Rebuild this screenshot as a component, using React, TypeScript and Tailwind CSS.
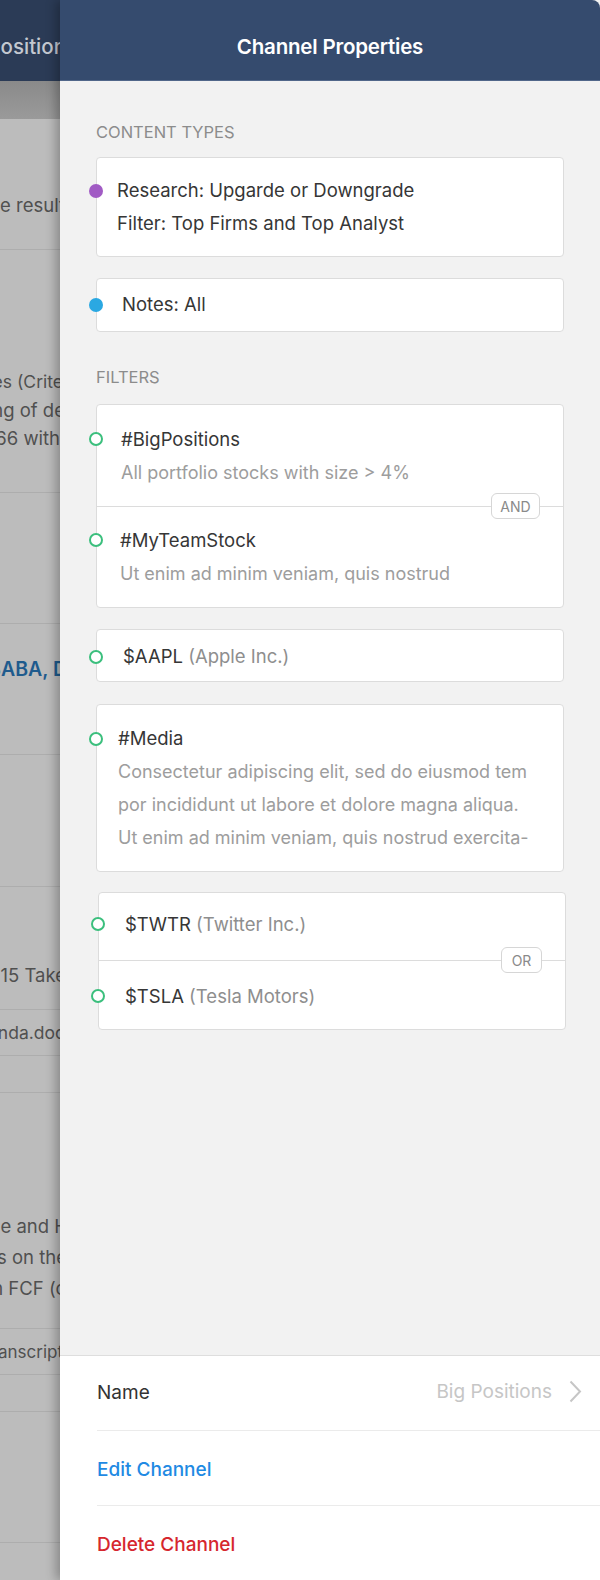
import React from "react";

function ClipRow({
  text,
  className,
  textClass,
}: {
  text: string;
  className: string;
  textClass: string;
}) {
  return (
    <div className={"flex justify-end whitespace-nowrap overflow-hidden " + className}>
      <span className={textClass}>{text}</span>
    </div>
  );
}

function Background() {
  const line = "border-b border-[#adadad]";
  return (
    <div className="w-[60px] shrink-0 flex flex-col bg-[#bcbcbc] overflow-hidden text-[18.5px] text-[#505050]">
      <div className="h-[81px] shrink-0 bg-[#2b3b56] flex justify-end items-center pt-[14px] whitespace-nowrap overflow-hidden">
        <span className="text-[20.5px] text-[#c3c8d0] font-medium mr-[-6px]">Position</span>
      </div>
      <div className="h-[38px] shrink-0 bg-gradient-to-b from-[#8a8a8a] to-[#9a9a9a]" />
      <div className={"h-[131px] shrink-0 flex flex-col " + line}>
        <ClipRow text="the result" className="mt-[72px] leading-[28px]" textClass="mr-[-5px]" />
      </div>
      <div className={"h-[243px] shrink-0 flex flex-col " + line}>
        <div className="mt-[118px] flex flex-col leading-[28px]">
          <ClipRow text="ies (Crite" className="text-[17.5px]" textClass="mr-[-3px]" />
          <ClipRow text="ring of de" className="" textClass="mr-[-5px]" />
          <ClipRow text="2266 with" className="" textClass="mr-[0px]" />
        </div>
      </div>
      <div className={"h-[131px] shrink-0 " + line} />
      <div className={"h-[131px] shrink-0 flex flex-col " + line}>
        <ClipRow
          text="BABA, D"
          className="mt-[31px] leading-[28px]"
          textClass="mr-[-7px] text-[19.5px] font-semibold text-[#1f5b8d]"
        />
      </div>
      <div className={"h-[132px] shrink-0 " + line} />
      <div className={"h-[123px] shrink-0 flex flex-col " + line}>
        <ClipRow text="2015 Take" className="mt-[74px] leading-[28px]" textClass="mr-[-6px]" />
      </div>
      <div className={"h-[46px] shrink-0 flex flex-col justify-center " + line}>
        <ClipRow text="genda.doc" className="text-[17.5px] leading-[22px]" textClass="mr-[-5px]" />
      </div>
      <div className={"h-[37px] shrink-0 " + line} />
      <div className={"h-[236px] shrink-0 flex flex-col " + line}>
        <div className="mt-[118px] flex flex-col leading-[31px]">
          <ClipRow text="cale and H" className="" textClass="mr-[-8px]" />
          <ClipRow text="ws on the" className="" textClass="mr-[-7px]" />
          <ClipRow text="th FCF (c" className="" textClass="mr-[-6px]" />
        </div>
      </div>
      <div className={"h-[46px] shrink-0 flex flex-col justify-center " + line}>
        <ClipRow text="transcript" className="text-[17px] leading-[22px]" textClass="mr-[-3px]" />
      </div>
      <div className={"h-[37px] shrink-0 " + line} />
      <div className={"h-[131px] shrink-0 " + line} />
      <div className="flex-1" />
    </div>
  );
}

function Dot({ color }: { color: string }) {
  return <span className={"w-[14px] h-[14px] rounded-full shrink-0 ml-[-8px] " + color} />;
}

function Ring() {
  return (
    <span className="w-[14px] h-[14px] rounded-full shrink-0 ml-[-8px] border-2 border-[#3bbf7d] bg-white" />
  );
}

function Badge({ label, w }: { label: string; w: string }) {
  return (
    <div className="relative h-px bg-[#dcdcdc]">
      <div
        className={
          "absolute right-[23px] top-[-13px] h-[26px] rounded-[6px] border border-[#d6d6d6] bg-white flex items-center justify-center text-[14px] text-[#8a8a8a] " +
          w
        }
      >
        {label}
      </div>
    </div>
  );
}

function Panel() {
  const card = "bg-white border border-[#dcdcdc] rounded-[4px]";
  const title = "text-[18.5px] text-[#363636]";
  const desc = "text-[18px] text-[#9d9d9d]";
  return (
    <div className="relative z-10 flex-1 flex flex-col bg-[#f2f2f2] shadow-[-4px_0_10px_rgba(0,0,0,0.28)]">
      <div className="h-[81px] shrink-0 bg-[#354b6e] border-b border-[#51678a] rounded-tr-[8px] flex items-center justify-center pt-[14px]">
        <span className="text-white text-[20.5px] font-semibold tracking-[-0.2px]">Channel Properties</span>
      </div>
      <div className="flex flex-col px-[36px]">
        <div className="mt-[41px] h-[20px] leading-[20px] text-[16.5px] text-[#8c8c8c] uppercase">Content Types</div>
        <div className={"mt-[15px] " + card}>
          <div className="flex items-start py-[16px]">
            <div className="h-[33px] flex items-center">
              <Dot color="bg-[#a15bc4]" />
            </div>
            <div className={"ml-[14px] flex flex-col leading-[33px] " + title}>
              <span>Research: Upgarde or Downgrade</span>
              <span>Filter: Top Firms and Top Analyst</span>
            </div>
          </div>
        </div>
        <div className={"mt-[21px] h-[54px] flex items-center " + card}>
          <Dot color="bg-[#2aa8e2]" />
          <span className={"ml-[19px] " + title}>Notes: All</span>
        </div>

        <div className="mt-[35px] h-[20px] leading-[20px] text-[16.5px] text-[#8c8c8c] uppercase">Filters</div>
        <div className={"mt-[17px] " + card}>
          <div className="flex items-start pt-[17px] pb-[16px]">
            <div className="h-[34px] flex items-center">
              <Ring />
            </div>
            <div className="ml-[18px] flex flex-col leading-[34px]">
              <span className={title}>#BigPositions</span>
              <span className={desc}>All portfolio stocks with size &gt; 4%</span>
            </div>
          </div>
          <Badge label="AND" w="w-[49px]" />
          <div className="flex items-start pt-[16px] pb-[16px]">
            <div className="h-[34px] flex items-center">
              <Ring />
            </div>
            <div className="ml-[17px] flex flex-col leading-[34px]">
              <span className={title}>#MyTeamStock</span>
              <span className={desc}>Ut enim ad minim veniam, quis nostrud</span>
            </div>
          </div>
        </div>

        <div className={"mt-[21px] h-[53px] flex items-center pt-[2px] " + card}>
          <Ring />
          <span className={"ml-[20px] " + title}>
            $AAPL <span className="text-[#8e8e8e]">(Apple Inc.)</span>
          </span>
        </div>

        <div className={"mt-[22px] " + card}>
          <div className="flex items-start pt-[17px] pb-[17px]">
            <div className="h-[33px] flex items-center">
              <Ring />
            </div>
            <div className="ml-[15px] flex flex-col leading-[33px] whitespace-nowrap">
              <span className={title}>#Media</span>
              <span className={desc}>Consectetur adipiscing elit, sed do eiusmod tem</span>
              <span className={desc}>por incididunt ut labore et dolore magna aliqua.</span>
              <span className={desc}>Ut enim ad minim veniam, quis nostrud exercita-</span>
            </div>
          </div>
        </div>

        <div className={"mt-[20px] ml-[2px] mr-[-2px] " + card}>
          <div className="h-[67px] flex items-start pt-[15px]">
            <div className="h-[32px] flex items-center">
              <Ring />
            </div>
            <span className={"ml-[20px] leading-[32px] " + title}>
              $TWTR <span className="text-[#8e8e8e]">(Twitter Inc.)</span>
            </span>
          </div>
          <Badge label="OR" w="w-[41px]" />
          <div className="h-[68px] flex items-start pt-[19px]">
            <div className="h-[32px] flex items-center">
              <Ring />
            </div>
            <span className={"ml-[20px] leading-[32px] " + title}>
              $TSLA <span className="text-[#8e8e8e]">(Tesla Motors)</span>
            </span>
          </div>
        </div>
      </div>

      <div className="mt-auto bg-white border-t border-[#dedede] flex flex-col pl-[37px] text-[19px]">
        <div className="h-[75px] flex items-center border-b border-[#ebebeb] pr-[18px]">
          <span className="text-[#333333] mt-[1px]">Name</span>
          <span className="ml-auto text-[#c6c6c6] mt-[-2px]">Big Positions</span>
          <svg width="13" height="23" viewBox="0 0 13 23" className="ml-[17px] mt-[-3px]">
            <path d="M1.5 1.5 L11 11.5 L1.5 21.5" fill="none" stroke="#c6c6c6" strokeWidth="2" />
          </svg>
        </div>
        <div className="h-[75px] flex items-center border-b border-[#ebebeb]">
          <span className="text-[#1f8ae3] font-medium mt-[4px]">Edit Channel</span>
        </div>
        <div className="h-[74px] flex items-center">
          <span className="text-[#d6272e] font-medium mt-[4px]">Delete Channel</span>
        </div>
      </div>
    </div>
  );
}

export default function App() {
  return (
    <div className="flex w-[600px] h-[1580px] overflow-hidden bg-white font-[Inter,'Noto_Sans',sans-serif]">
      <Background />
      <Panel />
    </div>
  );
}
